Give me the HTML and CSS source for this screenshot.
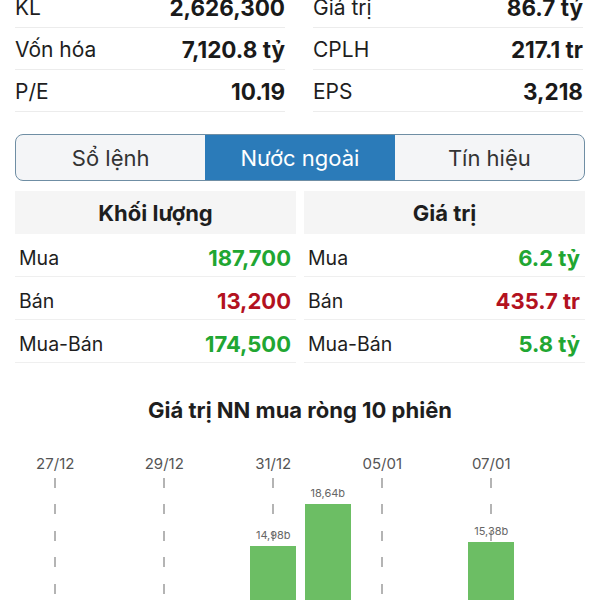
FILE: index.html
```html
<!DOCTYPE html>
<html lang="vi">
  <head>
    <meta charset="UTF-8" />
    <meta name="viewport" content="width=device-width, initial-scale=1.0" />
    <title>Nước ngoài</title>
    <link rel="stylesheet" href="styles.css">
  </head>
  <body>
    <div class="stats">
      <div class="stat-col">
        <div class="stat-row"><span>KL</span><b>2,626,300</b></div>
        <div class="stat-row"><span>Vốn hóa</span><b>7,120.8 tỷ</b></div>
        <div class="stat-row"><span>P/E</span><b>10.19</b></div>
      </div>
      <div class="stat-col">
        <div class="stat-row"><span>Giá trị</span><b>86.7 tỷ</b></div>
        <div class="stat-row"><span>CPLH</span><b>217.1 tr</b></div>
        <div class="stat-row"><span>EPS</span><b>3,218</b></div>
      </div>
    </div>

    <div class="tabs">
      <div class="tab">Sổ lệnh</div>
      <div class="tab active">Nước ngoài</div>
      <div class="tab">Tín hiệu</div>
    </div>

    <div class="foreign">
      <div class="foreign-col left">
        <div class="foreign-head">Khối lượng</div>
        <div class="foreign-row"><span>Mua</span><b class="up">187,700</b></div>
        <div class="foreign-row"><span>Bán</span><b class="down">13,200</b></div>
        <div class="foreign-row"><span>Mua-Bán</span><b class="up">174,500</b></div>
      </div>
      <div class="foreign-col right">
        <div class="foreign-head">Giá trị</div>
        <div class="foreign-row"><span>Mua</span><b class="up">6.2 tỷ</b></div>
        <div class="foreign-row"><span>Bán</span><b class="down">435.7 tr</b></div>
        <div class="foreign-row"><span>Mua-Bán</span><b class="up">5.8 tỷ</b></div>
      </div>
    </div>

    <h3 class="chart-title">Giá trị NN mua ròng 10 phiên</h3>

    <div class="chart">
      <div class="session">
        <div class="date">27/12</div>
        <div class="track dashed"></div>
      </div>
      <div class="session">
        <div class="date"></div>
        <div class="track"></div>
      </div>
      <div class="session">
        <div class="date">29/12</div>
        <div class="track dashed"></div>
      </div>
      <div class="session">
        <div class="date"></div>
        <div class="track"></div>
      </div>
      <div class="session">
        <div class="date">31/12</div>
        <div class="track dashed">
          <div class="bar-label">14,98b</div>
          <div class="bar" style="height: 172px"></div>
        </div>
      </div>
      <div class="session">
        <div class="date"></div>
        <div class="track">
          <div class="bar-label">18,64b</div>
          <div class="bar" style="height: 214px"></div>
        </div>
      </div>
      <div class="session">
        <div class="date">05/01</div>
        <div class="track dashed"></div>
      </div>
      <div class="session">
        <div class="date"></div>
        <div class="track"></div>
      </div>
      <div class="session">
        <div class="date">07/01</div>
        <div class="track dashed">
          <div class="bar-label">15,38b</div>
          <div class="bar" style="height: 176px"></div>
        </div>
      </div>
      <div class="session">
        <div class="date"></div>
        <div class="track"></div>
      </div>
    </div>
  </body>
</html>
```

FILE: styles.css
```css
body {
  margin: 0;
  background-color: white;
  font-family: "Inter", "Liberation Sans", sans-serif;
  color: #1e1e1e;
}

.stats {
  display: grid;
  grid-template-columns: 1fr 1fr;
  column-gap: 28px;
  margin-top: -14px;
  padding: 0 17px 0 15px;
}

.stat-row {
  display: flex;
  justify-content: space-between;
  align-items: center;
  padding-top: 2px;
  box-sizing: border-box;
  height: 42px;
  border-bottom: 1px solid #ececec;
  font-size: 21px;
}

.stat-row b {
  font-weight: 700;
  font-size: 22.5px;
  color: #1a1a1a;
}

.tabs {
  display: flex;
  margin: 22px 15px 0 15px;
  height: 45px;
  border: 1.5px solid #6f8ea4;
  border-radius: 8px;
  overflow: hidden;
  background-color: #f4f5f7;
}

.tab {
  flex: 1;
  display: flex;
  justify-content: center;
  align-items: center;
  font-size: 22px;
  color: #333;
}

.tab.active {
  background-color: #2b7bb9;
  color: white;
}

.foreign {
  display: flex;
  gap: 8px;
  margin: 10px 15px 0 15px;
}

.foreign-col {
  flex: 1;
}

.foreign-head {
  height: 43px;
  display: flex;
  justify-content: center;
  align-items: center;
  background-color: #f5f5f5;
  font-size: 22px;
  font-weight: 700;
}

.foreign-row {
  box-sizing: border-box;
  height: 43px;
  display: flex;
  justify-content: space-between;
  align-items: center;
  padding: 5px 5px 0 4px;
  border-bottom: 1px solid #efefef;
  font-size: 19.5px;
}

.foreign-row b {
  font-size: 22px;
  font-weight: 700;
}

.up {
  color: #21a632;
}

.down {
  color: #b3121f;
}

.chart-title {
  margin: 34px 0 0 0;
  text-align: center;
  font-size: 22px;
  line-height: 26px;
  font-weight: 700;
}

.chart {
  display: grid;
  grid-template-columns: repeat(10, 1fr);
  width: 545px;
  margin: 31px 0 0 28px;
}

.session {
  display: flex;
  flex-direction: column;
  align-items: center;
}

.date {
  height: 20px;
  line-height: 20px;
  font-size: 15px;
  color: #555;
}

.track {
  margin-top: 4px;
  height: 240px;
  width: 100%;
  display: flex;
  flex-direction: column;
  justify-content: flex-end;
  align-items: center;
}

.track.dashed {
  background-image: repeating-linear-gradient(
    to bottom,
    #b4b4b4 0,
    #b4b4b4 10px,
    transparent 10px,
    transparent 26.5px
  );
  background-size: 2px 100%;
  background-position: center top;
  background-repeat: no-repeat;
}

.bar-label {
  font-size: 11px;
  line-height: 14px;
  color: #666;
  margin-bottom: 4px;
}

.bar {
  width: 46px;
  background-color: #6cbe64;
}
```
